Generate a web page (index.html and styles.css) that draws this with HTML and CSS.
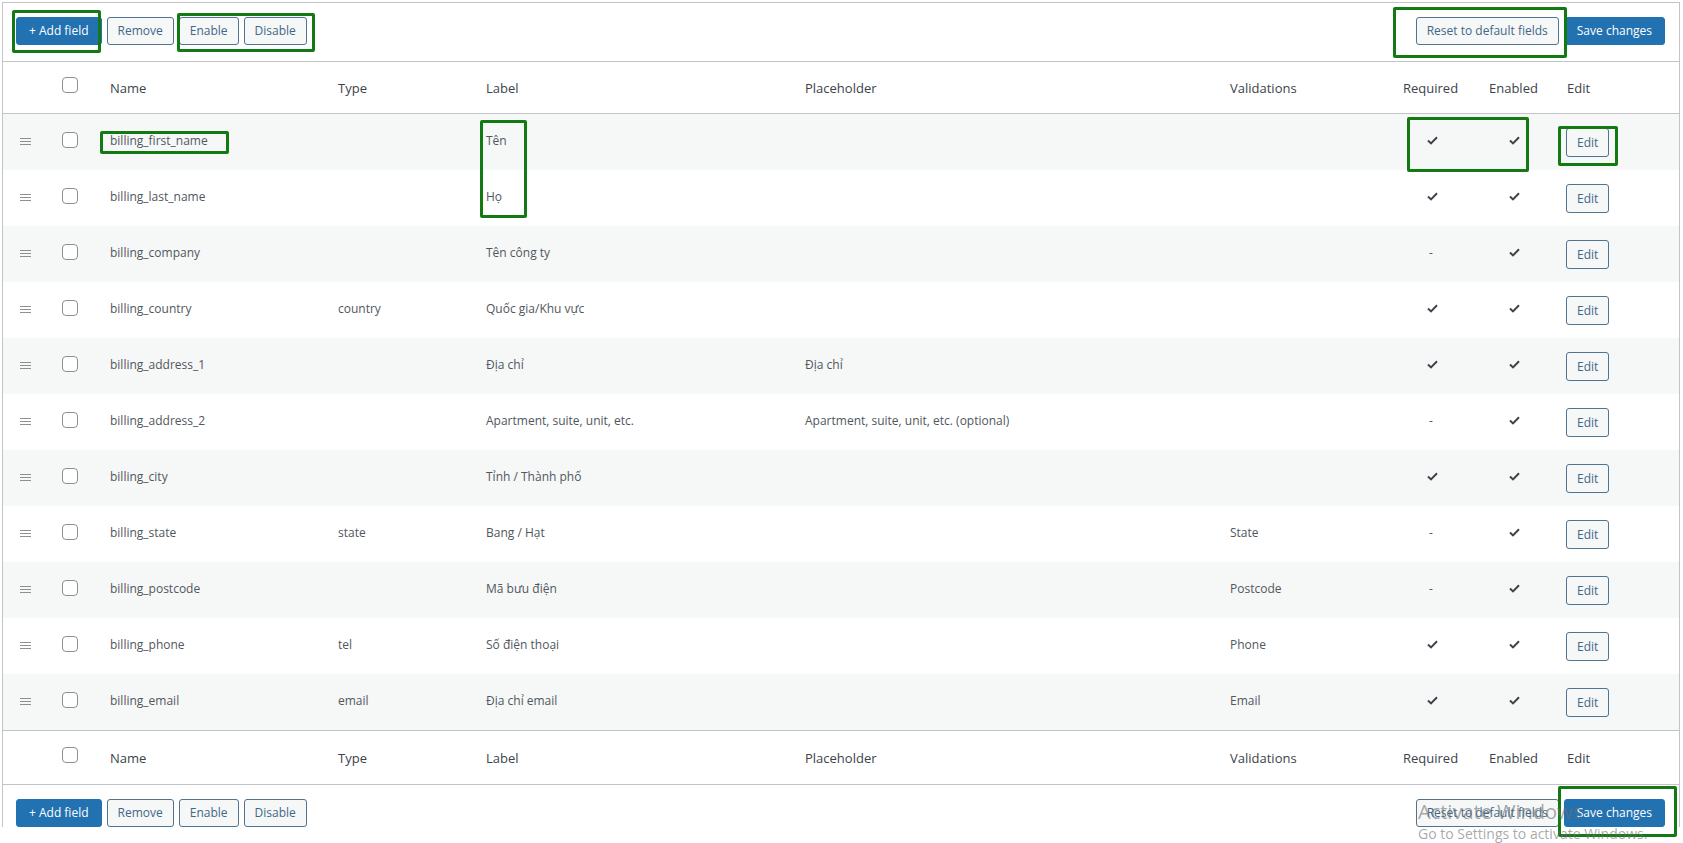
FILE: index.html
```html
<!DOCTYPE html>
<html lang="vi">
  <head>
    <meta charset="UTF-8" />
    <meta name="viewport" content="width=device-width, initial-scale=1.0" />
    <title>Checkout fields</title>
    <link rel="stylesheet" href="styles.css">
  </head>
  <body>
    <div class="fields">
      <div class="tablenav">
        <div class="tablenav__group">
          <button class="button button--primary">+ Add field</button>
          <button class="button">Remove</button>
          <button class="button">Enable</button>
          <button class="button">Disable</button>
        </div>
        <div class="tablenav__group">
          <button class="button">Reset to default fields</button>
          <button class="button button--primary">Save changes</button>
        </div>
      </div>

      <table class="fields-table">
        <colgroup>
          <col class="col-drag">
          <col class="col-cb">
          <col class="col-name">
          <col class="col-type">
          <col class="col-label">
          <col class="col-placeholder">
          <col class="col-valid">
          <col class="col-req">
          <col class="col-en">
          <col class="col-edit">
        </colgroup>
        <thead>
          <tr>
            <th></th>
            <th class="cell-cb"><input type="checkbox" class="cb"></th>
            <th>Name</th>
            <th>Type</th>
            <th>Label</th>
            <th>Placeholder</th>
            <th>Validations</th>
            <th>Required</th>
            <th>Enabled</th>
            <th>Edit</th>
          </tr>
        </thead>
        <tbody id="rows"></tbody>
        <tfoot>
          <tr>
            <th></th>
            <th class="cell-cb"><input type="checkbox" class="cb"></th>
            <th>Name</th>
            <th>Type</th>
            <th>Label</th>
            <th>Placeholder</th>
            <th>Validations</th>
            <th>Required</th>
            <th>Enabled</th>
            <th>Edit</th>
          </tr>
        </tfoot>
      </table>

      <div class="tablenav tablenav--bottom">
        <div class="tablenav__group">
          <button class="button button--primary">+ Add field</button>
          <button class="button">Remove</button>
          <button class="button">Enable</button>
          <button class="button">Disable</button>
        </div>
        <div class="tablenav__group">
          <button class="button">Reset to default fields</button>
          <button class="button button--primary">Save changes</button>
        </div>
      </div>
    </div>

    <!-- annotation boxes drawn on top of the screenshot -->
    <div class="marker marker--add"></div>
    <div class="marker marker--toggle"></div>
    <div class="marker marker--reset"></div>
    <div class="marker marker--name"></div>
    <div class="marker marker--label"></div>
    <div class="marker marker--checks"></div>
    <div class="marker marker--edit"></div>
    <div class="marker marker--save"></div>

    <div class="watermark">
      <div class="watermark__title">Activate Windows</div>
      <div class="watermark__sub">Go to Settings to activate Windows.</div>
    </div>

    <script>
      const fields = [
        ["billing_first_name", "", "Tên", "", "", true, true],
        ["billing_last_name", "", "Họ", "", "", true, true],
        ["billing_company", "", "Tên công ty", "", "", false, true],
        ["billing_country", "country", "Quốc gia/Khu vực", "", "", true, true],
        ["billing_address_1", "", "Địa chỉ", "Địa chỉ", "", true, true],
        ["billing_address_2", "", "Apartment, suite, unit, etc.", "Apartment, suite, unit, etc. (optional)", "", false, true],
        ["billing_city", "", "Tỉnh / Thành phố", "", "", true, true],
        ["billing_state", "state", "Bang / Hạt", "", "State", false, true],
        ["billing_postcode", "", "Mã bưu điện", "", "Postcode", false, true],
        ["billing_phone", "tel", "Số điện thoại", "", "Phone", true, true],
        ["billing_email", "email", "Địa chỉ email", "", "Email", true, true]
      ];

      const handle = '<svg class="handle" width="11" height="8" viewBox="0 0 11 8"><path d="M0 0.5H11M0 3.5H11M0 6.5H11" stroke="#8c8f94" stroke-width="1"/></svg>';
      const tick = '<svg class="tick" width="11" height="9" viewBox="0 0 11 9"><path d="M1 4.6L4 7.4L10 1.2" fill="none" stroke="#3c434a" stroke-width="2"/></svg>';
      const flag = (on) => on ? tick : '<span class="dash">-</span>';

      const tbody = document.getElementById("rows");
      tbody.innerHTML = fields.map((f) => `
        <tr>
          <td class="cell-drag">${handle}</td>
          <td class="cell-cb"><input type="checkbox" class="cb"></td>
          <td>${f[0]}</td>
          <td>${f[1]}</td>
          <td>${f[2]}</td>
          <td>${f[3]}</td>
          <td>${f[4]}</td>
          <td class="cell-req">${flag(f[5])}</td>
          <td class="cell-en">${flag(f[6])}</td>
          <td class="cell-edit"><button class="button button--small">Edit</button></td>
        </tr>`).join("");
    </script>
  </body>
</html>
```

FILE: styles.css
```css
* {
  box-sizing: border-box;
}

body {
  background: #fff;
  color: #50575e;
  font-family: "Open Sans", "Noto Sans", sans-serif;
  font-size: 12px;
  margin: 0;
}

.fields {
  border: 1px solid #c3c4c7;
  border-bottom: 0;
  margin: 2px 3px 0 2px;
}

.tablenav {
  display: flex;
  justify-content: space-between;
  padding: 14px 14px 16px 13px;
}

.tablenav--bottom {
  padding-bottom: 0;
}

.tablenav__group {
  display: flex;
  gap: 5px;
}

.button {
  background: #f6f7f7;
  border: 1px solid #4f7391;
  border-radius: 3px;
  color: #3f6788;
  cursor: pointer;
  font-family: inherit;
  font-size: 12px;
  height: 28px;
  line-height: 26px;
  padding: 0 10px;
}

.button--primary {
  background: #2271b1;
  border-color: #2271b1;
  color: #fff;
  padding: 0 12px;
}

.button--small {
  height: 29px;
  line-height: 27px;
}

.fields-table {
  border-spacing: 0;
  table-layout: fixed;
  width: 100%;
}

.col-drag { width: 45px; }
.col-cb { width: 52px; }
.col-name { width: 228px; }
.col-type { width: 148px; }
.col-label { width: 319px; }
.col-placeholder { width: 425px; }
.col-valid { width: 173px; }
.col-req { width: 86px; }
.col-en { width: 78px; }
.col-edit { width: 122px; }

.fields-table th {
  border-bottom: 1px solid #c3c4c7;
  border-top: 1px solid #c3c4c7;
  color: #3c434a;
  font-size: 13px;
  font-weight: 400;
  height: 53px;
  padding: 0 10px;
  text-align: left;
  vertical-align: middle;
}

.fields-table tfoot th {
  height: 55px;
}

.fields-table td {
  height: 56px;
  padding: 0 10px 4px;
  vertical-align: middle;
  white-space: nowrap;
}

.fields-table tbody tr:nth-child(odd) {
  background: #f6f7f7;
}

.fields-table .cell-drag {
  padding: 0 0 0 17px;
}

.handle {
  display: block;
}

.fields-table .cell-cb {
  padding: 0 0 0 14px;
}

.cb {
  appearance: none;
  background: #fff;
  border: 1px solid #8c8f94;
  border-radius: 4px;
  display: block;
  height: 16px;
  margin: -5px 0 0;
  width: 16px;
}

.fields-table .cell-req {
  padding-left: 34px;
}

.fields-table .cell-en {
  padding-left: 30px;
}

.tick {
  display: block;
}

.dash {
  color: #50575e;
  padding-left: 2px;
}

.fields-table .cell-edit {
  padding: 0 0 0 9px;
}

.marker {
  border: 3px solid #137a13;
  border-radius: 2px;
  position: absolute;
}

.marker--add { height: 43px; left: 12px; top: 10px; width: 89px; }
.marker--toggle { height: 39px; left: 177px; top: 13px; width: 138px; }
.marker--reset { height: 51px; left: 1393px; top: 7px; width: 174px; }
.marker--name { height: 23px; left: 100px; top: 131px; width: 129px; }
.marker--label { height: 98px; left: 480px; top: 120px; width: 47px; }
.marker--checks { height: 55px; left: 1407px; top: 117px; width: 122px; }
.marker--edit { height: 40px; left: 1558px; top: 126px; width: 60px; }
.marker--save { height: 51px; left: 1558px; top: 786px; width: 119px; }

.watermark {
  color: rgba(110, 110, 110, 0.6);
  left: 1418px;
  pointer-events: none;
  position: absolute;
  top: 799px;
  white-space: nowrap;
}

.watermark__title {
  font-size: 20px;
  line-height: 25px;
}

.watermark__sub {
  font-size: 14px;
  line-height: 19px;
}
```
